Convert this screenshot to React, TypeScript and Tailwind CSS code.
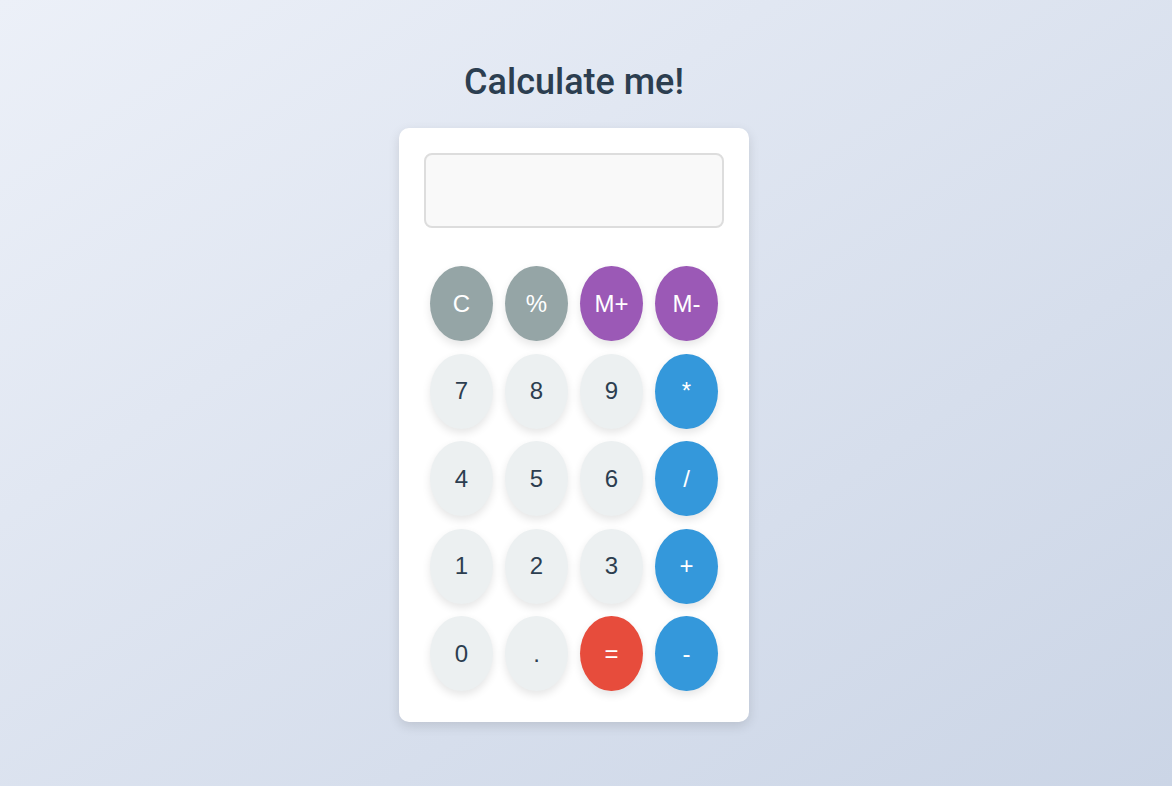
import React, { useState } from "react";

type Kind = "util" | "mem" | "num" | "op" | "eq";

const keys: { label: string; kind: Kind }[] = [
    { label: "C", kind: "util" },
    { label: "%", kind: "util" },
    { label: "M+", kind: "mem" },
    { label: "M-", kind: "mem" },
    { label: "7", kind: "num" },
    { label: "8", kind: "num" },
    { label: "9", kind: "num" },
    { label: "*", kind: "op" },
    { label: "4", kind: "num" },
    { label: "5", kind: "num" },
    { label: "6", kind: "num" },
    { label: "/", kind: "op" },
    { label: "1", kind: "num" },
    { label: "2", kind: "num" },
    { label: "3", kind: "num" },
    { label: "+", kind: "op" },
    { label: "0", kind: "num" },
    { label: ".", kind: "num" },
    { label: "=", kind: "eq" },
    { label: "-", kind: "op" },
];

const kindClass: Record<Kind, string> = {
    util: "bg-[#95a5a6] text-white",
    mem: "bg-[#9b59b6] text-white",
    num: "bg-[#ecf0f1] text-[#2c3e50]",
    op: "bg-[#3498db] text-white",
    eq: "bg-[#e74c3c] text-white",
};

export default function App() {
    const [display, setDisplay] = useState("");

    const press = (label: string) => {
        if (label === "C") return setDisplay("");
        if (label === "=") {
            try {
                // eslint-disable-next-line no-new-func
                setDisplay(String(Function(`return (${display})`)()));
            } catch {
                setDisplay("Error");
            }
            return;
        }
        if (label === "M+" || label === "M-" || label === "%") return;
        setDisplay(display + label);
    };

    return (
        <div className="min-h-[786px] w-full bg-gradient-to-br from-[#ecf0f8] to-[#cbd5e6] flex flex-col items-center pt-[61px] pr-[24px] font-['Liberation_Sans',Arial,sans-serif]">
            <h1 className="text-[36px] leading-[43px] font-medium text-[#2c3e50] font-['Roboto',sans-serif] mb-[24px]">
                Calculate me!
            </h1>
            <div className="w-[350px] bg-white rounded-[10px] p-[25px] shadow-[0_4px_12px_rgba(0,0,0,0.12)]">
                <input
                    readOnly
                    value={display}
                    className="w-full h-[75px] rounded-[8px] border-2 border-[#dddddd] bg-[#f9f9f9] px-3 text-right text-[28px] text-[#2c3e50] outline-none mb-[31.75px]"
                />
                <div className="grid grid-cols-4">
                    {keys.map((k) => (
                        <button
                            key={k.label}
                            onClick={() => press(k.label)}
                            className={`m-[6.25px] h-[75px] rounded-[50%] text-[24px] leading-none shadow-[0_4px_8px_rgba(0,0,0,0.1)] ${kindClass[k.kind]}`}
                        >
                            {k.label}
                        </button>
                    ))}
                </div>
            </div>
        </div>
    );
}
